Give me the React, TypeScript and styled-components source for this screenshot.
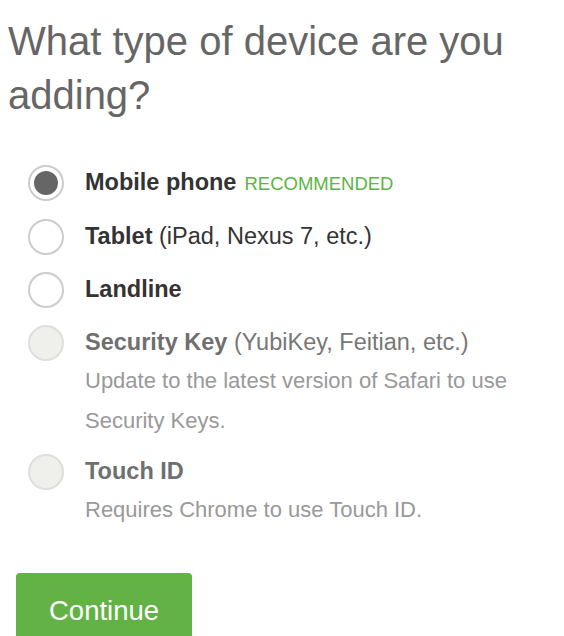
import * as React from "react";
import styled, { createGlobalStyle } from "styled-components";

const GlobalStyle = createGlobalStyle`
  body {
    margin: 0;
    background: #fff;
    font-family: "Liberation Sans", Arial, Helvetica, sans-serif;
  }
`;

const Page = styled.div`
  padding: 14px 8px 0;
`;

const Heading = styled.h1`
  margin: 0;
  font-size: 40px;
  line-height: 54px;
  font-weight: 400;
  color: #666;
  max-width: 540px;
`;

const OptionList = styled.div`
  margin-top: 34px;
  padding-left: 20px;
  display: flex;
  flex-direction: column;
`;

const Option = styled.label<{ $disabled?: boolean }>`
  display: grid;
  grid-template-columns: 36px 1fr;
  column-gap: 21px;
  align-items: center;
  cursor: ${(p) => (p.$disabled ? "default" : "pointer")};
`;

const Radio = styled.span<{ $checked?: boolean; $disabled?: boolean }>`
  width: 36px;
  height: 36px;
  box-sizing: border-box;
  border-radius: 50%;
  border: 2px solid ${(p) => (p.$disabled ? "#dedede" : "#cccccc")};
  background: ${(p) => (p.$disabled ? "#efefeb" : "#fff")};
  display: flex;
  align-items: center;
  justify-content: center;
  &::after {
    content: "";
    display: ${(p) => (p.$checked ? "block" : "none")};
    width: 24px;
    height: 24px;
    border-radius: 50%;
    background: #666;
  }
`;

const Label = styled.span<{ $disabled?: boolean }>`
  font-size: 23.5px;
  line-height: 53px;
  color: ${(p) => (p.$disabled ? "#777" : "#333")};
  white-space: nowrap;
  b {
    font-weight: 700;
    color: ${(p) => (p.$disabled ? "#6f6f6f" : "#333")};
  }
`;

const Badge = styled.span`
  margin-left: 8px;
  font-size: 18.5px;
  color: #5cb544;
`;

const Description = styled.p`
  grid-column: 2;
  margin: -8px 0 4px;
  font-size: 22px;
  line-height: 40px;
  color: #999;
  max-width: 440px;
`;

const ContinueButton = styled.button`
  margin: 39px 0 0 8px;
  height: 76px;
  padding: 0 33px;
  border: none;
  border-radius: 4px;
  background: #63b246;
  color: #fff;
  font-family: "Liberation Sans", Arial, Helvetica, sans-serif;
  font-size: 27.5px;
  cursor: pointer;
`;

interface IDevice {
  id: string;
  name: string;
  extra?: string;
  note?: string;
  recommended?: boolean;
  disabled?: boolean;
}

const devices: IDevice[] = [
  { id: "mobile", name: "Mobile phone", recommended: true },
  { id: "tablet", name: "Tablet", extra: "(iPad, Nexus 7, etc.)" },
  { id: "landline", name: "Landline" },
  {
    id: "key",
    name: "Security Key",
    extra: "(YubiKey, Feitian, etc.)",
    note: "Update to the latest version of Safari to use Security Keys.",
    disabled: true,
  },
  {
    id: "touch",
    name: "Touch ID",
    note: "Requires Chrome to use Touch ID.",
    disabled: true,
  },
];

const App: React.FC = () => {
  const [selected, setSelected] = React.useState("mobile");
  return (
    <Page>
      <GlobalStyle />
      <Heading>What type of device are you adding?</Heading>
      <OptionList>
        {devices.map((d) => (
          <Option
            key={d.id}
            $disabled={d.disabled}
            onClick={() => !d.disabled && setSelected(d.id)}
          >
            <Radio $checked={selected === d.id} $disabled={d.disabled} />
            <Label $disabled={d.disabled}>
              <b>{d.name}</b>
              {d.extra && ` ${d.extra}`}
              {d.recommended && <Badge>RECOMMENDED</Badge>}
            </Label>
            {d.note && <Description>{d.note}</Description>}
          </Option>
        ))}
      </OptionList>
      <ContinueButton>Continue</ContinueButton>
    </Page>
  );
};

export default App;
